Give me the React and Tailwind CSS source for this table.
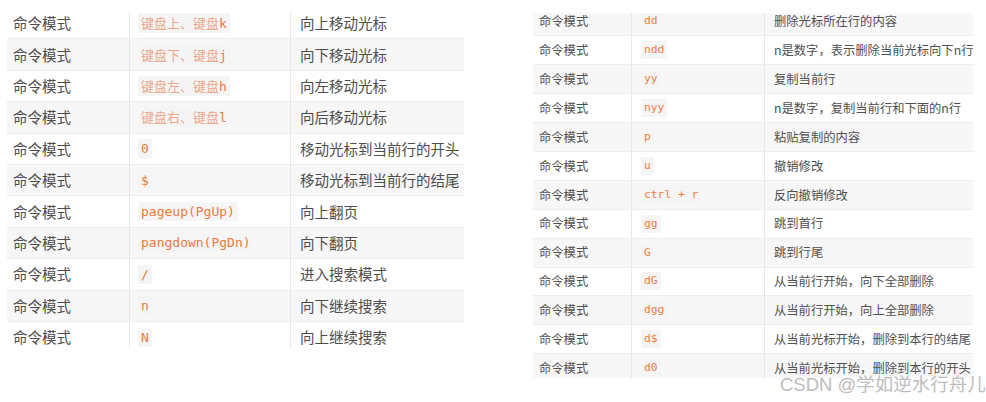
import React from "react";

const CJK = '"Noto Sans CJK SC", "Noto Sans", sans-serif';
const MONO = '"DejaVu Sans Mono", "Noto Sans CJK SC", monospace';

const leftRows = [
  [["键盘上、键盘", "k"], "向上移动光标"],
  [["键盘下、键盘", "j"], "向下移动光标"],
  [["键盘左、键盘", "h"], "向左移动光标"],
  [["键盘右、键盘", "l"], "向后移动光标"],
  [["", "0"], "移动光标到当前行的开头"],
  [["", "$"], "移动光标到当前行的结尾"],
  [["", "pageup(PgUp)"], "向上翻页"],
  [["", "pangdown(PgDn)"], "向下翻页"],
  [["", "/"], "进入搜索模式"],
  [["", "n"], "向下继续搜索"],
  [["", "N"], "向上继续搜索"],
];

const rightRows = [
  ["dd", "删除光标所在行的内容"],
  ["ndd", "n是数字，表示删除当前光标向下n行"],
  ["yy", "复制当前行"],
  ["nyy", "n是数字，复制当前行和下面的n行"],
  ["p", "粘贴复制的内容"],
  ["u", "撤销修改"],
  ["ctrl + r", "反向撤销修改"],
  ["gg", "跳到首行"],
  ["G", "跳到行尾"],
  ["dG", "从当前行开始，向下全部删除"],
  ["dgg", "从当前行开始，向上全部删除"],
  ["d$", "从当前光标开始，删除到本行的结尾"],
  ["d0", "从当前光标开始，删除到本行的开头"],
];

function LeftTable() {
  return (
    <div className="mt-[13px] ml-[7px] w-[457px] h-[335px] overflow-hidden shrink-0">
      <div className="-mt-[5px]">
        {leftRows.map(([code, desc], i) => (
          <div
            key={i}
            className={`flex h-[31.4px] items-center border-b border-[#ededed] ${
              i % 2 === 1 ? "bg-[#f7f7f7]" : "bg-white"
            }`}
          >
            <div
              className="w-[123px] h-full flex items-center pl-[6px] text-[14.5px] text-[#4d4d4d] border-r border-[#e6e6e6]"
              style={{ fontFamily: CJK }}
            >
              命令模式
            </div>
            <div className="w-[161px] h-full flex items-center pl-[8px] border-r border-[#e6e6e6]">
              <span
                className="inline-block bg-[#f5f5f5] px-[3px] leading-[19px] text-[13px] text-[#ec7a3c] whitespace-nowrap"
                style={{ fontFamily: MONO }}
              >
                {code[0] && (
                  <span className="text-[#eba88a]" style={{ fontFamily: CJK }}>
                    {code[0]}
                  </span>
                )}
                {code[1]}
              </span>
            </div>
            <div
              className="flex-1 h-full flex items-center pl-[9px] text-[14.5px] text-[#4d4d4d] whitespace-nowrap overflow-hidden"
              style={{ fontFamily: CJK }}
            >
              {desc}
            </div>
          </div>
        ))}
      </div>
    </div>
  );
}

function RightTable() {
  return (
    <div className="mt-[13px] ml-[69px] w-[440px] h-[365px] overflow-hidden shrink-0">
      <div className="-mt-[5.5px]">
        {rightRows.map(([code, desc], i) => (
          <div
            key={i}
            className={`flex h-[28.9px] items-center border-b border-[#ededed] ${
              i % 2 === 0 ? "bg-[#f7f7f7]" : "bg-white"
            }`}
          >
            <div
              className="w-[99px] h-full flex items-center pl-[6px] text-[12.3px] text-[#505050] border-r border-[#e6e6e6]"
              style={{ fontFamily: CJK }}
            >
              命令模式
            </div>
            <div className="w-[133px] h-full flex items-center pl-[9px] border-r border-[#e6e6e6]">
              <span
                className="inline-block bg-[#f5f5f5] px-[3px] leading-[18px] text-[11.3px] text-[#ee7e3e] whitespace-nowrap"
                style={{ fontFamily: MONO }}
              >
                {code}
              </span>
            </div>
            <div
              className="w-[208px] h-full flex items-center pl-[9px] text-[12.3px] text-[#505050] whitespace-nowrap overflow-hidden"
              style={{ fontFamily: CJK }}
            >
              {desc}
            </div>
          </div>
        ))}
      </div>
    </div>
  );
}

export default function App() {
  return (
    <div className="relative w-[986px] h-[402px] bg-white overflow-hidden flex items-start">
      <LeftTable />
      <RightTable />
      <div
        className="absolute left-[780px] top-[372px] text-[18.5px] leading-[26px] text-[#bdbdbd] whitespace-nowrap"
        style={{ fontFamily: '"Liberation Sans", "Noto Sans CJK SC", sans-serif' }}
      >
        CSDN @学如逆水行舟儿
      </div>
    </div>
  );
}
